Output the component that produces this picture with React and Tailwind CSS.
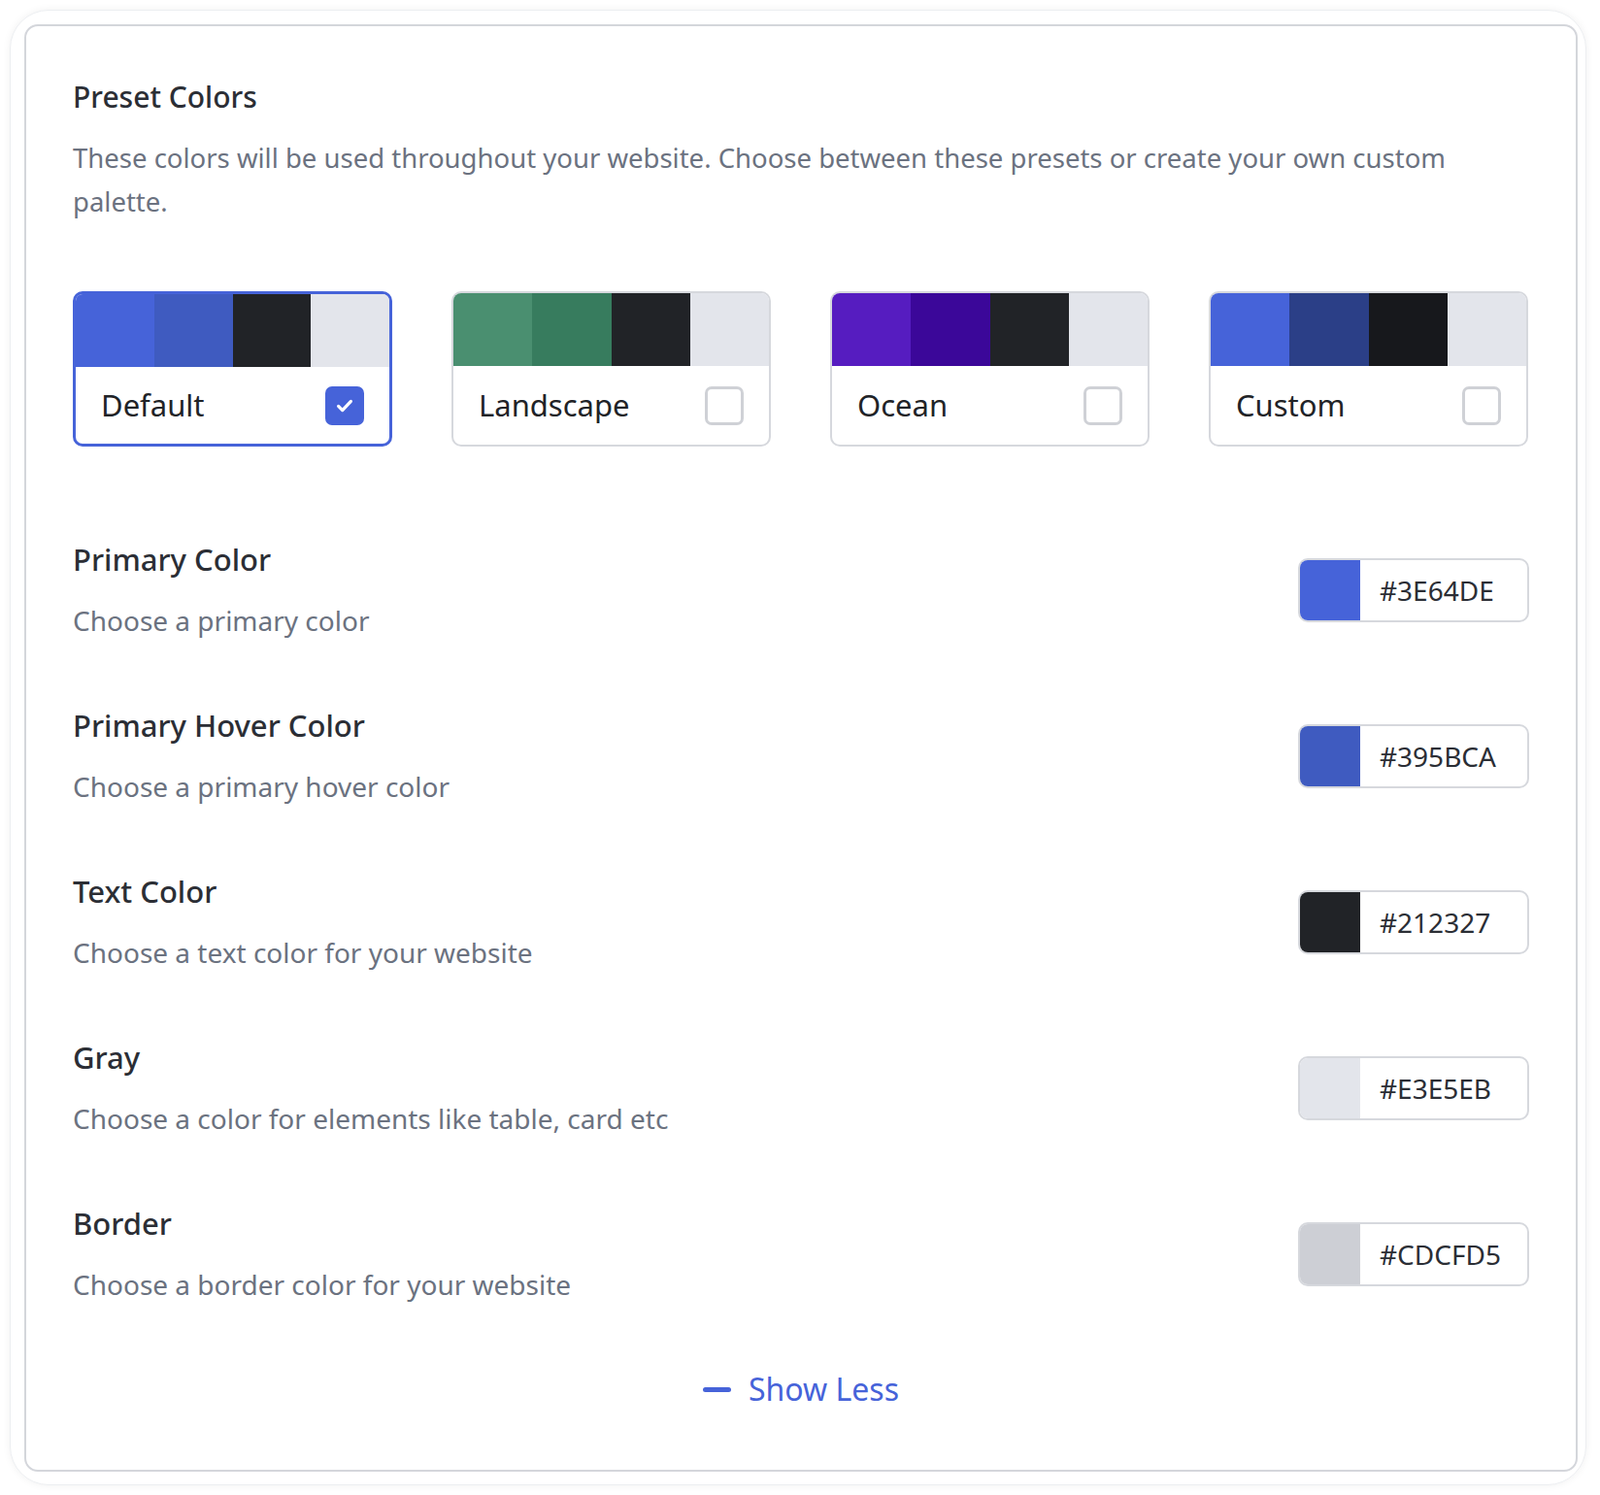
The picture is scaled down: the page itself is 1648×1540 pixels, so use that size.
import React from "react";

const presets = [
    {name: "Default", colors: ["#4663d9", "#3f5bc0", "#212327", "#e3e5eb"], active: true},
    {name: "Landscape", colors: ["#4a8f70", "#377c5e", "#212327", "#e3e5eb"]},
    {name: "Ocean", colors: ["#561cc0", "#3b0799", "#212327", "#e3e5eb"]},
    {name: "Custom", colors: ["#4663d9", "#2b3f87", "#17181c", "#e3e5eb"]},
];

const rows = [
    {title: "Primary Color", desc: "Choose a primary color", hex: "#3E64DE", color: "#4663d9"},
    {title: "Primary Hover Color", desc: "Choose a primary hover color", hex: "#395BCA", color: "#3f5bc0"},
    {title: "Text Color", desc: "Choose a text color for your website", hex: "#212327", color: "#212327"},
    {title: "Gray", desc: "Choose a color for elements like table, card etc", hex: "#E3E5EB", color: "#e3e5eb"},
    {title: "Border", desc: "Choose a border color for your website", hex: "#CDCFD5", color: "#cdcfd5"},
];

const App = () => {
    return (
        <div className="w-[1648px] h-[1540px] bg-white p-[10px] font-[Inter,'Inter_Variable',Roboto,sans-serif]">
            <div className="w-[1624px] h-[1520px] rounded-[40px] border border-[#eceef1] shadow-[0_0_8px_rgba(0,0,0,0.06)] p-[14px]">
                <div className="h-[1491px] w-[1600px] rounded-[14px] border-2 border-[#d4d6db] px-[48px] pt-[53px]">
                    <h2 className="text-[30px] leading-[40px] font-medium text-[#2b2e35]">Preset Colors</h2>
                    <p className="mt-[20px] text-[27.5px] leading-[45px] text-[#6b7280]">
                        These colors will be used throughout your website. Choose between these presets or create your own custom palette.
                    </p>
                    <div className="mt-[70px] flex gap-[61px]">
                        {presets.map(p => (
                            <div key={p.name} className={"w-[329px] h-[160px] rounded-[10px] overflow-hidden flex flex-col " + (p.active ? "border-[3px] border-[#4663d9]" : "border-2 border-[#d6d8dd]")}>
                                <div className="flex h-[75px]">
                                    {p.colors.map((c, i) => (
                                        <div key={i} className="flex-1" style={{background: c}} />
                                    ))}
                                </div>
                                <div className="flex-1 flex items-center justify-between px-[26px]">
                                    <span className="text-[31px] text-[#212327]">{p.name}</span>
                                    {p.active ? (
                                        <span className="w-[40px] h-[40px] rounded-[7px] bg-[#4663d9] flex items-center justify-center">
                                            <svg width="22" height="22" viewBox="0 0 24 24" fill="none" stroke="white" strokeWidth="3.5" strokeLinecap="round" strokeLinejoin="round"><path d="M5 12.5l4.5 4.5L19 7" /></svg>
                                        </span>
                                    ) : (
                                        <span className="w-[40px] h-[40px] rounded-[7px] border-[3px] border-[#cfd1d6]" />
                                    )}
                                </div>
                            </div>
                        ))}
                    </div>
                    <div className="mt-[96px] flex flex-col gap-[68px]">
                        {rows.map(r => (
                            <div key={r.title} className="flex items-center justify-between">
                                <div>
                                    <div className="text-[31px] leading-[40px] font-medium text-[#2b2e35]">{r.title}</div>
                                    <div className="mt-[23px] text-[28px] leading-[40px] text-[#6b7280]">{r.desc}</div>
                                </div>
                                <div className="w-[238px] h-[66px] rounded-[10px] border-2 border-[#d6d8dd] overflow-hidden flex">
                                    <div className="w-[62px] h-full" style={{background: r.color}} />
                                    <div className="flex-1 flex items-center pl-[20px] text-[28px] text-[#2b2e35]">{r.hex}</div>
                                </div>
                            </div>
                        ))}
                    </div>
                    <div className="mt-[68px] flex items-center justify-center gap-[18px] text-[32px] leading-[40px] text-[#4663d9]">
                        <span className="w-[29px] h-[5px] rounded-full bg-[#4663d9]" />
                        <span>Show Less</span>
                    </div>
                </div>
            </div>
        </div>
    );
};

export default App;
